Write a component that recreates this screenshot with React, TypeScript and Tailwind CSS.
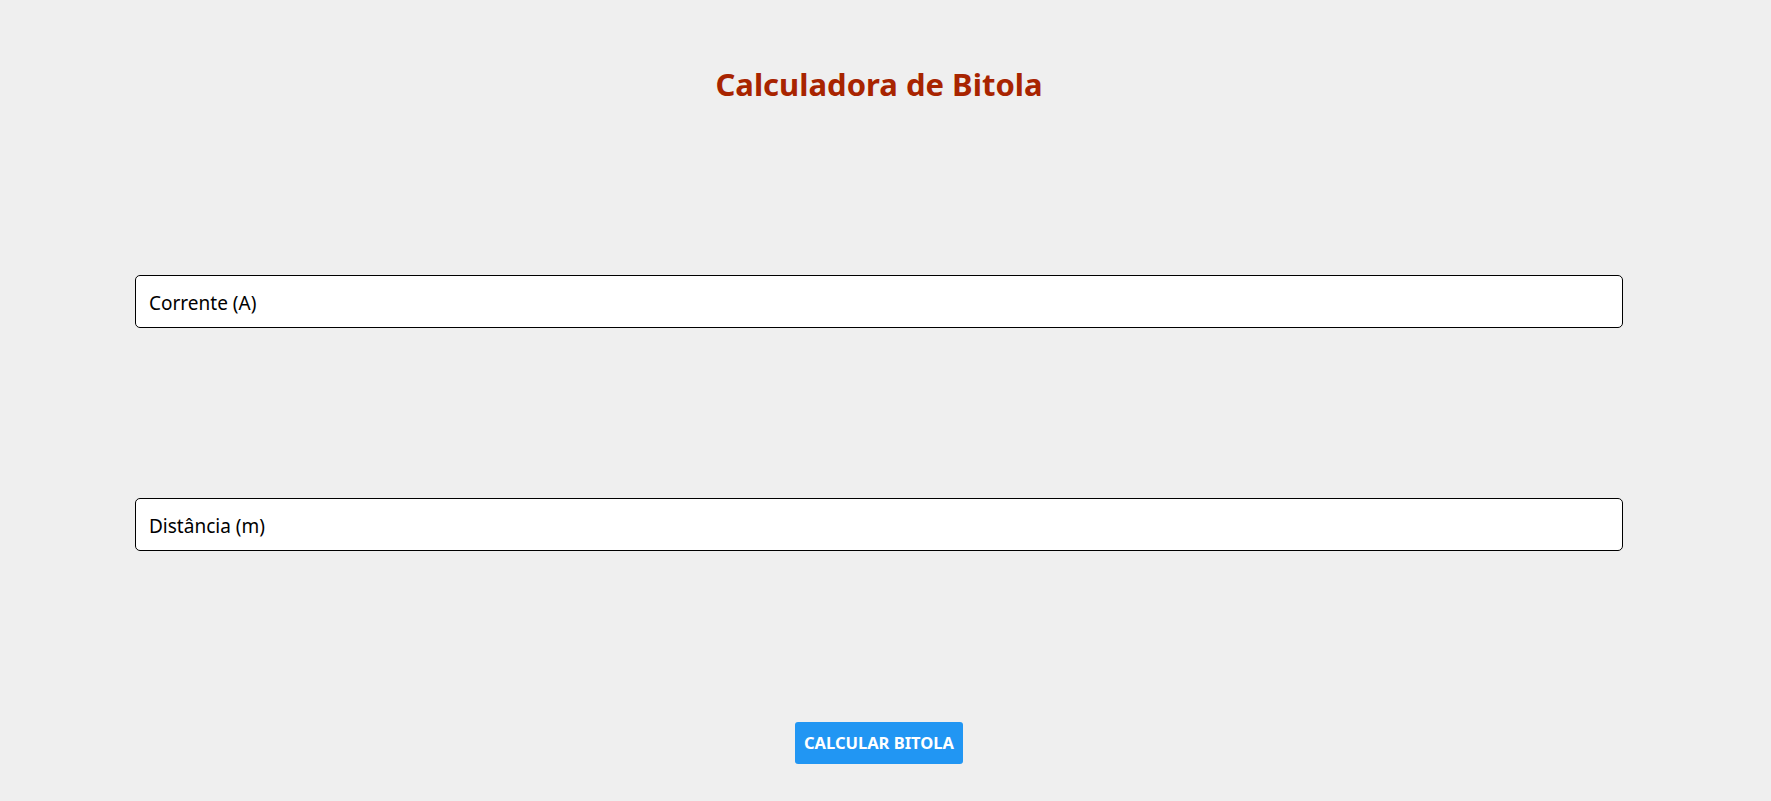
export default function App() {
  return (
    <div className="min-h-[801px] bg-[#efefef] font-['Noto_Sans',sans-serif]">
      <div className="w-[1758px] flex flex-col items-center">
        <h1 className="mt-[62px] text-[31px] leading-[44px] font-bold text-[#a82400]">
          Calculadora de Bitola
        </h1>

        <div className="mt-[169px] w-full px-[135px] flex flex-col gap-[170px]">
          <input
            type="text"
            placeholder="Corrente (A)"
            className="w-full h-[53px] px-[13px] pt-[2px] bg-white border border-black rounded-[5px] text-[19px] text-black placeholder:text-black outline-none"
          />
          <input
            type="text"
            placeholder="Distância (m)"
            className="w-full h-[53px] px-[13px] pt-[2px] bg-white border border-black rounded-[5px] text-[19px] text-black placeholder:text-black outline-none"
          />
        </div>

        <button className="mt-[171px] w-[168px] h-[42px] bg-[#2196f3] rounded-[3px] text-white font-bold text-[16.5px] uppercase">
          Calcular Bitola
        </button>
      </div>
    </div>
  );
}
